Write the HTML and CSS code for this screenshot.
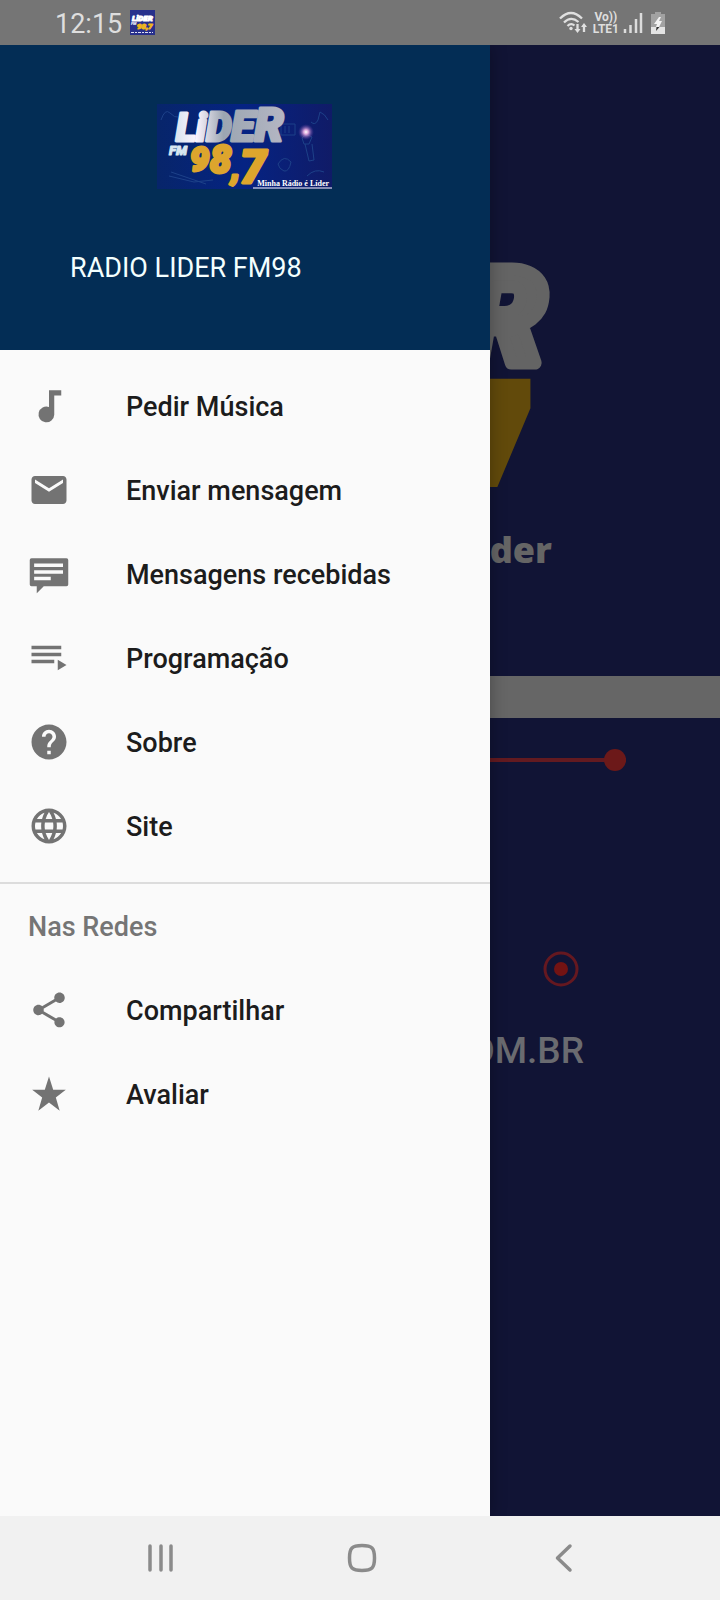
FILE: index.html
```html
<!DOCTYPE html>
<html lang="pt-BR">
<head>
<meta charset="utf-8">
<meta name="viewport" content="width=device-width, initial-scale=1">
<title>Radio Lider FM98</title>
<link rel="stylesheet" href="styles.css">
</head>
<body>
<header class="status">
  <time class="clock">12:15</time>
  <svg class="app-badge" viewBox="0 0 25 25" aria-hidden="true">
    <rect width="25" height="25" fill="#27308c"/>
    <g class="art">
      <text x="2" y="11" font-size="8" fill="#fff" stroke="#fff" stroke-width="1">LiDER</text>
      <text x="7" y="19" font-size="8" fill="#eeb51e" stroke="#eeb51e" stroke-width="1">98,7</text>
      <text x="1" y="15" font-size="4" fill="#fff">FM</text>
    </g>
    <path d="M1 22.500h22" stroke="#dfe1f5" stroke-width="1.200" stroke-dasharray="3 1 2 1"/>
  </svg>
  <span class="spacer"></span>
  <svg class="wifi" viewBox="0 0 28 24" fill="none" stroke="#e0e0e0" stroke-width="2.300" aria-hidden="true">
    <path d="M1 7.500Q12 -3.500 23 7.500M5 11.500Q12 4.500 19.500 11M8.500 15Q12 11.500 15.500 14.500"/>
    <circle cx="12" cy="17.500" r="1.700" fill="#e0e0e0" stroke="none"/>
    <path d="M18.500 13v7M25 21v-7"/>
    <path d="M15.500 18h6l-3 4zM22 16h6l-3-4z" fill="#e0e0e0" stroke="none"/>
  </svg>
  <span class="volte"><span>Vo))</span><span>LTE1</span></span>
  <svg class="signal" viewBox="0 0 20 22" aria-hidden="true">
    <path d="M2 17v4M7.500 13v8M13 7v14M18 1v20" stroke="#dcdcdc" stroke-width="2.500"/>
  </svg>
  <svg class="battery" viewBox="0 0 14 22" aria-hidden="true">
    <path d="M4 0h6v2h4v20H0V2h4z" fill="#a2a2a2"/>
    <path d="M0 15h14v7H0z" fill="#e4e4e4"/>
    <path d="M8 5L3 12h3l-1 3h3l3-6H8l2-4z" fill="#f2f2f2"/>
    <path d="M5.500 15h3L5 19z" fill="#333"/>
  </svg>
</header>

<div class="stage">
  <main class="app">
    <svg class="banner" viewBox="0 0 720 631" aria-hidden="true">
      <g class="art">
        <text x="460" y="319" font-size="134" fill="#646464" stroke="#646464" stroke-width="13">R</text>
        <text class="upright" x="458" y="425" font-size="103" fill="#624a0b" stroke="#624a0b" stroke-width="34">7</text>
      </g>
      <text class="slogan" x="552" y="518" text-anchor="end">Lider</text>
    </svg>
    <div class="strip"></div>
    <section class="player">
      <input class="volume" type="range" min="0" max="100" value="100" aria-label="Volume">
      <button class="record" type="button" aria-label="Gravar">
        <svg viewBox="0 0 36 36"><circle cx="18" cy="18" r="16" fill="none" stroke="#651820" stroke-width="3"/><circle cx="18" cy="18" r="7" fill="#731313"/></svg>
      </button>
      <p class="site">COM.BR</p>
    </section>
  </main>

  <aside class="drawer">
    <div class="brand">
      <svg class="logo" viewBox="0 0 175 85" role="img" aria-label="Lider FM 98,7">
        <defs>
          <linearGradient id="sky" x2="1" y2="0"><stop offset="0" stop-color="#07256a"/><stop offset=".5" stop-color="#052383"/><stop offset="1" stop-color="#101b67"/></linearGradient>
          <linearGradient id="silver" gradientUnits="userSpaceOnUse" x1="17" y1="0" x2="127" y2="0"><stop offset="0" stop-color="#d5e2ee"/><stop offset=".2" stop-color="#fdf5ff"/><stop offset=".45" stop-color="#9ca6b2"/><stop offset="1" stop-color="#b4b6c3"/></linearGradient>
          <radialGradient id="flare"><stop offset="0" stop-color="#fff"/><stop offset=".3" stop-color="#d9a3da"/><stop offset="1" stop-color="#503096" stop-opacity="0"/></radialGradient>
        </defs>
        <rect width="175" height="85" fill="url(#sky)"/>
        <g fill="none" stroke="#1d4189">
          <path d="M4 16q4-12 9-7t8 4M154 18q4 4 7-2l2-8q5 2 8 8M124 20h14v11h-14zM128 22v7M132 22v7"/>
          <path d="M145 34q4-5 10-1l-3 7h-5zM148 40l4 17 5-1-2-16M121 60q6-10 13-2-2 10-7 9-5-2-6-7zM12 72l25 6 19-2M14 68l35 12M150 72q8-8 17-4"/>
        </g>
        <text class="art" x="19" y="37" fill="url(#silver)" stroke="url(#silver)" stroke-width="3"><tspan font-size="38">Li</tspan><tspan font-size="40">D</tspan><tspan font-size="43">E</tspan><tspan font-size="46">R</tspan></text>
        <text class="art" x="12" y="51" font-size="13" fill="#d8e7f1" stroke="#d8e7f1" stroke-width="1">FM</text>
        <text class="art" x="33" y="67" fill="#dda52d" stroke="#dda52d" stroke-width="3"><tspan font-size="34">9</tspan><tspan font-size="38" dx="1" dy="2">8</tspan><tspan font-size="34" dy="6">,</tspan><tspan font-size="46" dy="4">7</tspan></text>
        <circle cx="149" cy="28" r="8" fill="url(#flare)"/>
        <path d="M96 84h79" stroke="#fff"/>
        <text class="tagline" x="172" y="82" text-anchor="end">Minha Rádio é Líder</text>
      </svg>
      <h1 class="title">RADIO LIDER FM98</h1>
    </div>

    <nav class="menu">
      <a class="item" href="#pedir"><svg viewBox="0 0 24 24"><path d="M12 3v9.600a4.500 4.500 0 1 0 3 4.400V6H19V3z"/></svg><span>Pedir Música</span></a>
      <a class="item" href="#enviar"><svg viewBox="0 0 24 24"><path d="M20 4H4c-1.100 0-2 .9-2 2v12c0 1.100.9 2 2 2h16c1.100 0 2-.9 2-2V6c0-1.100-.9-2-2-2zm0 4l-8 5-8-5V6l8 5 8-5z"/></svg><span>Enviar mensagem</span></a>
      <a class="item" href="#recebidas"><svg viewBox="0 0 24 24"><path d="M2 3h20q1 0 1 1v14q0 1-1 1H9l-4 4v-4H2q-1 0-1-1V4q0-1 1-1zm1.500 3v2h16.500V6zm0 3.800v2h16.500v-2zm0 3.700v2h9.500v-2z"/></svg><span>Mensagens recebidas</span></a>
      <a class="item" href="#programacao"><svg viewBox="0 0 24 24"><path d="M2 5h17v2H2zM2 9h17v2H2zM2 13h13v2H2zM17 13l5 3-5 3z"/></svg><span>Programação</span></a>
      <a class="item" href="#sobre"><svg viewBox="0 0 24 24"><path d="M12 2C6.480 2 2 6.480 2 12s4.480 10 10 10 10-4.480 10-10S17.520 2 12 2zm1 17h-2v-2h2v2zm2.070-7.750l-.9.920C13.450 12.900 13 13.500 13 15h-2v-.5c0-1.100.450-2.100 1.170-2.830l1.240-1.260c.370-.360.590-.860.590-1.410 0-1.100-.9-2-2-2s-2 .9-2 2H8c0-2.210 1.790-4 4-4s4 1.790 4 4c0 .880-.360 1.680-.930 2.250z"/></svg><span>Sobre</span></a>
      <a class="item" href="#site"><svg viewBox="0 0 24 24"><path d="M11.990 2C6.470 2 2 6.480 2 12s4.470 10 9.990 10C17.520 22 22 17.520 22 12S17.520 2 11.990 2zm6.930 6h-2.950c-.320-1.250-.780-2.450-1.380-3.560 1.840.630 3.370 1.910 4.330 3.560zM12 4.040c.830 1.200 1.480 2.530 1.910 3.960h-3.820c.430-1.430 1.080-2.760 1.910-3.960zM4.260 14C4.100 13.360 4 12.690 4 12s.1-1.360.260-2h3.380c-.080.660-.140 1.320-.140 2s.060 1.340.140 2H4.260zm.820 2h2.950c.320 1.250.780 2.450 1.380 3.560-1.840-.630-3.370-1.900-4.330-3.560zm2.950-8H5.080c.960-1.660 2.490-2.930 4.330-3.560C8.810 5.550 8.350 6.750 8.030 8zM12 19.960c-.830-1.200-1.480-2.530-1.910-3.960h3.820c-.430 1.430-1.080 2.760-1.910 3.960zM14.340 14H9.660c-.090-.660-.160-1.320-.160-2s.070-1.350.160-2h4.680c.090.650.160 1.320.160 2s-.070 1.340-.160 2zm.250 5.560c.6-1.110 1.060-2.310 1.380-3.560h2.950c-.960 1.650-2.490 2.930-4.330 3.560zM16.360 14c.080-.660.140-1.320.140-2s-.060-1.340-.140-2h3.380c.160.640.260 1.310.260 2s-.1 1.360-.260 2h-3.380z"/></svg><span>Site</span></a>
    </nav>
    <nav class="menu social" aria-labelledby="redes">
      <h2 class="group" id="redes"><span>Nas Redes</span></h2>
      <a class="item" href="#compartilhar"><svg viewBox="0 0 24 24"><path d="M18 16.080c-.760 0-1.440.3-1.960.770L8.910 12.700c.050-.230.090-.460.090-.7s-.040-.470-.090-.7l7.050-4.110c.540.5 1.250.810 2.040.810 1.660 0 3-1.340 3-3s-1.340-3-3-3-3 1.340-3 3c0 .240.040.470.090.7L8.040 9.810C7.500 9.310 6.790 9 6 9c-1.660 0-3 1.340-3 3s1.340 3 3 3c.790 0 1.500-.310 2.040-.810l7.120 4.160c-.050.210-.080.430-.080.650 0 1.610 1.310 2.920 2.920 2.920s2.920-1.310 2.920-2.920-1.310-2.920-2.920-2.920z"/></svg><span>Compartilhar</span></a>
      <a class="item" href="#avaliar"><svg viewBox="0 0 24 24"><path d="M12 2l2.400 7.500h7.200l-5.700 4.500 2.200 7.500-6.100-4.600-6.100 4.600 2.200-7.500-5.700-4.500h7.200z"/></svg><span>Avaliar</span></a>
    </nav>
  </aside>
</div>

<footer class="keys">
  <button type="button" aria-label="Recentes"><svg viewBox="0 0 32 32"><path d="M5 4v24M16 4v24M26 4v24"/></svg></button>
  <button type="button" aria-label="Início"><svg viewBox="0 0 32 32"><path d="M16 3.500C26 3.500 28.500 6 28.500 16S26 28.500 16 28.500 3.500 26 3.500 16 6 3.500 16 3.500z"/></svg></button>
  <button type="button" aria-label="Voltar"><svg viewBox="0 0 32 32"><path d="M23 4L10.500 16 23 28"/></svg></button>
</footer>
</body>
</html>
```
FILE: styles.css
```css
* { box-sizing: border-box; }

body {
  margin: 0;
  min-height: 100vh;
  display: flex;
  flex-direction: column;
  font-family: Roboto, "Liberation Sans", sans-serif;
  background: #111435;
}

button {
  border: 0;
  padding: 0;
  background: none;
}

svg { display: block; flex: none; }

.art {
  font-family: Roboto, sans-serif;
  font-weight: 900;
  font-style: italic;
  stroke-linejoin: round;
}
.upright {
  font-style: normal;
  stroke-linejoin: miter;
}

/* Status bar */
.status {
  display: flex;
  align-items: center;
  height: 45px;
  padding: 0 55px;
  background: #757575;
  color: #dedede;
}
.clock {
  padding-top: 2px;
  font-size: 27px;
}
.app-badge { width: 25px; height: 25px; margin-left: 8px; }
.spacer { flex: 1; }
.wifi { width: 28px; height: 24px; }
.volte {
  display: flex;
  flex-direction: column;
  align-items: center;
  margin: 0 4px 0 6px;
  font-size: 12px;
  line-height: 12px;
  font-weight: 700;
}
.signal { width: 20px; height: 22px; }
.battery { width: 14px; height: 22px; margin-left: 8px; }

/* Drawer and the dimmed screen share one grid cell */
.stage {
  flex: 1;
  display: grid;
}
.app,
.drawer { grid-area: 1 / 1; }

.app {
  display: flex;
  flex-direction: column;
  min-width: 0;
}
.banner { width: 100%; height: auto; }
.slogan {
  font-family: "Open Sans", sans-serif;
  font-size: 36px;
  font-weight: 800;
  fill: #656565;
}
.strip { height: 42px; background: #666; }
.player {
  display: flex;
  flex-direction: column;
  align-items: flex-end;
  padding: 20px 94px;
}
.volume {
  appearance: none;
  width: 100%;
  height: 44px;
  margin: 0;
  background: none;
}
.volume::-webkit-slider-runnable-track {
  height: 4px;
  background: #631a20;
}
.volume::-webkit-slider-thumb {
  appearance: none;
  width: 22px;
  height: 22px;
  margin-top: -9px;
  border-radius: 50%;
  background: #6c1919;
}
.record {
  width: 36px;
  height: 36px;
  margin: 169px 47px 0 0;
}
.site {
  margin: 42px 42px 0 0;
  font-size: 37px;
  line-height: 44px;
  font-weight: 500;
  color: #6a6b70;
}

.drawer {
  width: 490px;
  max-width: 100%;
  background: #fafafa;
  box-shadow: 0 0 16px rgba(0, 0, 0, 0.3);
  clip-path: inset(0 -20px 0 0);
}
.brand {
  height: 305px;
  padding: 59px 2px 0 0;
  background: #032d55;
}
.logo { width: 175px; height: 85px; margin: 0 auto; }
.tagline {
  font-family: "Liberation Serif", serif;
  font-size: 8px;
  font-weight: 700;
  fill: #fff;
}
.title {
  margin: 61px 0 0 70px;
  font-size: 27px;
  line-height: 36px;
  font-weight: 400;
  color: #f3ffff;
}

.menu { padding: 14px 0; }
.item,
.group {
  display: flex;
  align-items: center;
  gap: 56px;
  height: 84px;
  margin: 0;
  padding: 0 28px;
  font-size: 27px;
  font-weight: 500;
  color: #1c1c1c;
  text-decoration: none;
}
.item span,
.group span { padding-top: 2px; }
.item svg { width: 42px; height: 42px; fill: #737373; }
.social {
  padding-top: 0;
  border-top: 2px solid #dcdcdc;
}
.group { color: #757575; }

/* System navigation */
.keys {
  display: flex;
  justify-content: space-between;
  align-items: center;
  height: 84px;
  padding: 0 141px 0 145px;
  background: #f1f1f1;
}
.keys svg {
  width: 32px;
  height: 32px;
  fill: none;
  stroke: #8b8b8b;
  stroke-width: 3.5;
  stroke-linecap: round;
  stroke-linejoin: round;
}
```
